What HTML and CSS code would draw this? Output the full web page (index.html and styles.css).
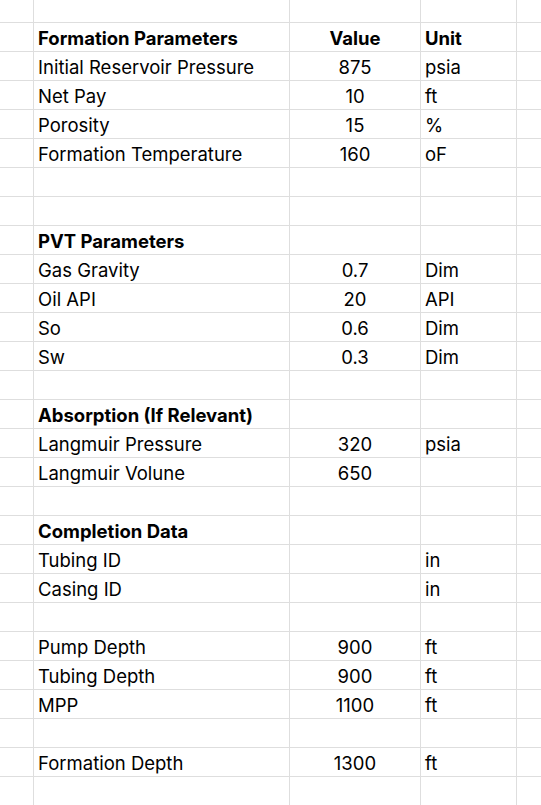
FILE: index.html
```html
<!DOCTYPE html>
<html>
<head>
<meta charset="utf-8">
<link rel="stylesheet" href="styles.css">
</head>
<body>
<div class="sheet">
  <div class="c"></div><div class="c"></div><div class="c"></div><div class="c"></div><div class="c"></div>

  <div class="c"></div><div class="c b">Formation Parameters</div><div class="c v b">Value</div><div class="c u b">Unit</div><div class="c"></div>
  <div class="c"></div><div class="c">Initial Reservoir Pressure</div><div class="c v">875</div><div class="c u">psia</div><div class="c"></div>
  <div class="c"></div><div class="c">Net Pay</div><div class="c v">10</div><div class="c u">ft</div><div class="c"></div>
  <div class="c"></div><div class="c">Porosity</div><div class="c v">15</div><div class="c u">%</div><div class="c"></div>
  <div class="c"></div><div class="c">Formation Temperature</div><div class="c v">160</div><div class="c u">oF</div><div class="c"></div>
  <div class="c"></div><div class="c"></div><div class="c"></div><div class="c"></div><div class="c"></div>
  <div class="c"></div><div class="c"></div><div class="c"></div><div class="c"></div><div class="c"></div>

  <div class="c"></div><div class="c b">PVT Parameters</div><div class="c"></div><div class="c"></div><div class="c"></div>
  <div class="c"></div><div class="c">Gas Gravity</div><div class="c v">0.7</div><div class="c u">Dim</div><div class="c"></div>
  <div class="c"></div><div class="c">Oil API</div><div class="c v">20</div><div class="c u">API</div><div class="c"></div>
  <div class="c"></div><div class="c">So</div><div class="c v">0.6</div><div class="c u">Dim</div><div class="c"></div>
  <div class="c"></div><div class="c">Sw</div><div class="c v">0.3</div><div class="c u">Dim</div><div class="c"></div>
  <div class="c"></div><div class="c"></div><div class="c"></div><div class="c"></div><div class="c"></div>

  <div class="c"></div><div class="c b">Absorption (If Relevant)</div><div class="c"></div><div class="c"></div><div class="c"></div>
  <div class="c"></div><div class="c">Langmuir Pressure</div><div class="c v">320</div><div class="c u">psia</div><div class="c"></div>
  <div class="c"></div><div class="c">Langmuir Volune</div><div class="c v">650</div><div class="c u"></div><div class="c"></div>
  <div class="c"></div><div class="c"></div><div class="c"></div><div class="c"></div><div class="c"></div>

  <div class="c"></div><div class="c b">Completion Data</div><div class="c"></div><div class="c"></div><div class="c"></div>
  <div class="c"></div><div class="c">Tubing ID</div><div class="c v"></div><div class="c u">in</div><div class="c"></div>
  <div class="c"></div><div class="c">Casing ID</div><div class="c v"></div><div class="c u">in</div><div class="c"></div>
  <div class="c"></div><div class="c"></div><div class="c"></div><div class="c"></div><div class="c"></div>

  <div class="c"></div><div class="c">Pump Depth</div><div class="c v">900</div><div class="c u">ft</div><div class="c"></div>
  <div class="c"></div><div class="c">Tubing Depth</div><div class="c v">900</div><div class="c u">ft</div><div class="c"></div>
  <div class="c"></div><div class="c">MPP</div><div class="c v">1100</div><div class="c u">ft</div><div class="c"></div>
  <div class="c"></div><div class="c"></div><div class="c"></div><div class="c"></div><div class="c"></div>

  <div class="c"></div><div class="c">Formation Depth</div><div class="c v">1300</div><div class="c u">ft</div><div class="c"></div>
  <div class="c"></div><div class="c"></div><div class="c"></div><div class="c"></div><div class="c"></div>
</div>
</body>
</html>
```

FILE: styles.css
```css
html, body {
  margin: 0;
  padding: 0;
  background: #ffffff;
  overflow: hidden;
}
.sheet {
  display: grid;
  grid-template-columns: 33px 255px 130px 95px 1fr;
  grid-template-rows: 22px repeat(27, 28px);
  gap: 1px;
  background: #dedede;
  width: 541px;
  height: 805px;
  font-family: Inter, "Liberation Sans", sans-serif;
  font-size: 18.5px;
  color: #000;
}
.c {
  background: #fff;
  display: flex;
  align-items: flex-end;
  padding: 0 4px 3px;
  white-space: nowrap;
  overflow: visible;
  line-height: 20px;
}
.b { font-weight: 700; }
.v { justify-content: center; }
.u { justify-content: flex-start; }
```
